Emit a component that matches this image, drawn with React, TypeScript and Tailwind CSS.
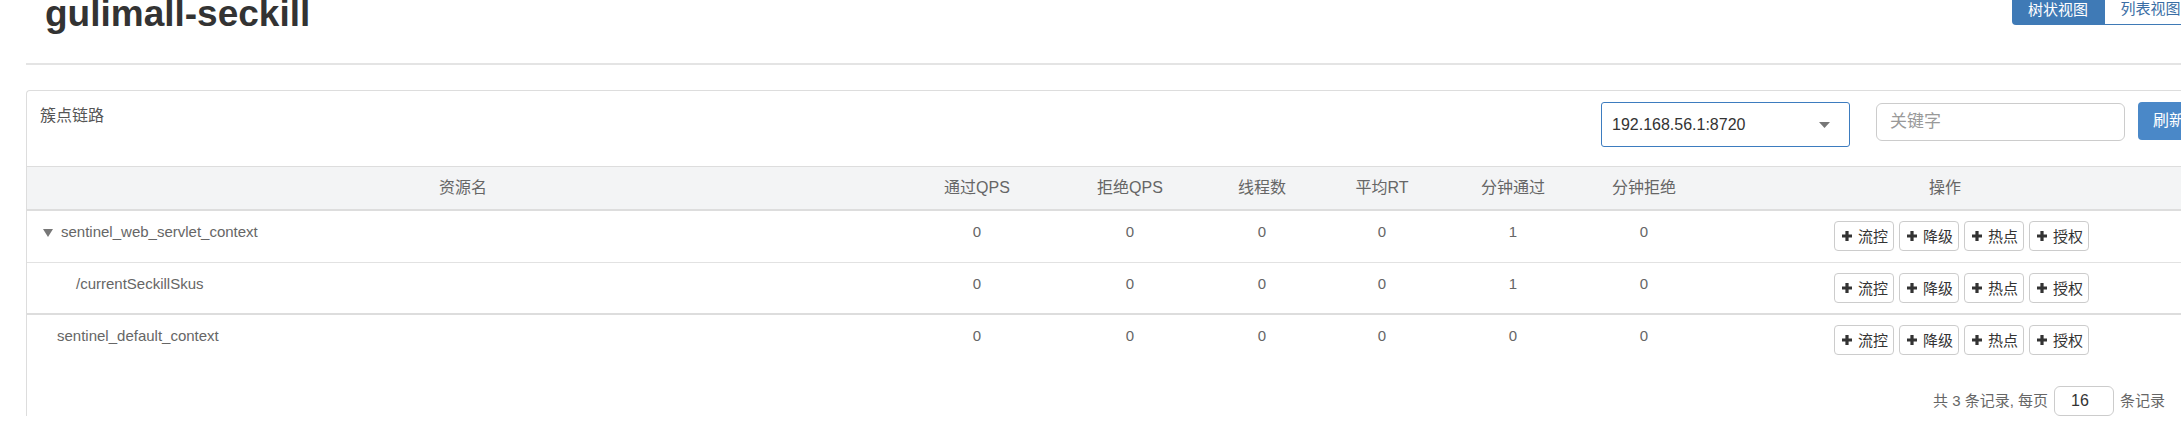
import React from "react";

type Row = {
  name: string;
  pad: string;
  expander: boolean;
  vals: number[];
  border: string;
};

const rows: Row[] = [
  { name: "sentinel_web_servlet_context", pad: "pl-[16px]", expander: true, vals: [0, 0, 0, 0, 1, 0], border: "border-b border-[#e2e2e2]" },
  { name: "/currentSeckillSkus", pad: "pl-[49px]", expander: false, vals: [0, 0, 0, 0, 1, 0], border: "border-b-2 border-[#dddddd]" },
  { name: "sentinel_default_context", pad: "pl-[30px]", expander: false, vals: [0, 0, 0, 0, 0, 0], border: "" },
];

const headers = ["资源名", "通过QPS", "拒绝QPS", "线程数", "平均RT", "分钟通过", "分钟拒绝", "操作"];
const actions = ["流控", "降级", "热点", "授权"];

function PlusIcon() {
  return (
    <svg width="10" height="10" viewBox="0 0 10 10">
      <path d="M3.4 0h3.2v3.4H10v3.2H6.6V10H3.4V6.6H0V3.4h3.4z" fill="#333" />
    </svg>
  );
}

function ActionButton({ label }: { label: string }) {
  return (
    <button className="flex h-[30px] w-[60px] items-center gap-[6px] rounded-[4px] border border-[#cccccc] bg-white pl-[7px] text-[15px] leading-none text-[#333]">
      <PlusIcon />
      <span>{label}</span>
    </button>
  );
}

export default function App() {
  return (
    <div className="h-[428px] w-[2181px] overflow-hidden bg-white font-['Liberation_Sans','Noto_Sans_CJK_SC',sans-serif]">
      <div className="w-[2240px] pl-[26px]">
        {/* page header */}
        <div className="flex h-[63px] items-start pr-[43px]">
          <h1 className="-mt-[6px] ml-[19px] text-[37px] font-bold leading-[40px] text-[#333]">
            gulimall-seckill
          </h1>
          <div className="-mt-[9px] ml-auto flex">
            <button className="h-[34px] w-[92px] rounded-bl-[4px] bg-[#3f7ab6] pt-[4px] text-[15px] text-white">
              树状视图
            </button>
            <button className="h-[34px] w-[93px] border border-[#3f7ab6] bg-white pt-[3px] text-[15px] text-[#3a6ea5]">
              列表视图
            </button>
          </div>
        </div>
        <div className="h-[2px] bg-[#e4e4e4]" />

        {/* card */}
        <div className="mt-[25px] rounded-t-[4px] border border-b-0 border-r-0 border-[#dddddd]">
          <div className="flex h-[75px] items-start">
            <div className="w-[1574px] shrink-0 pl-[13px] pt-[14px] text-[16px] leading-[22px] text-[#555]">簇点链路</div>
            <div className="mt-[11px] flex h-[45px] w-[249px] shrink-0 items-center justify-between rounded-[3px] border border-[#3d7cbf] pl-[10px] pr-[19px] text-[16px] text-[#333]">
              <span>192.168.56.1:8720</span>
              <svg width="11" height="6" viewBox="0 0 11 6">
                <path d="M0 0h11L5.5 6z" fill="#777" />
              </svg>
            </div>
            <div className="ml-[26px] mt-[12px] flex h-[38px] w-[249px] shrink-0 items-center rounded-[6px] border border-[#cccccc] pl-[13px] text-[17px] text-[#999]">
              关键字
            </div>
            <button className="ml-[13px] mt-[11px] h-[38px] w-[66px] shrink-0 rounded-[4px] bg-[#4a88c8] pl-[15px] text-left text-[16px] text-white">
              刷新
            </button>
          </div>

          {/* table header */}
          <div className="grid h-[45px] grid-cols-[872px_156px_150px_114px_126px_136px_126px_476px_1fr] border-b-2 border-t border-[#dddddd] bg-[#f3f4f5] text-[16px] text-[#666]">
            {headers.map((h) => (
              <div key={h} className="flex items-center justify-center">
                {h}
              </div>
            ))}
            <div />
          </div>

          {/* rows */}
          {rows.map((r) => (
            <div
              key={r.name}
              className={`grid h-[52px] grid-cols-[872px_156px_150px_114px_126px_136px_126px_476px_1fr] text-[15px] leading-[22px] text-[#666] ${r.border}`}
            >
              <div className={`flex items-start pt-[10px] ${r.pad}`}>
                {r.expander && (
                  <svg width="10" height="8" viewBox="0 0 10 8" className="mr-[8px] mt-[8px]">
                    <path d="M0 0h10L5 8z" fill="#777" />
                  </svg>
                )}
                <span>{r.name}</span>
              </div>
              {r.vals.map((v, i) => (
                <div key={i} className="pt-[10px] text-center">
                  {v}
                </div>
              ))}
              <div className="flex gap-[5px] pl-[127px] pt-[10px]">
                {actions.map((a) => (
                  <ActionButton key={a} label={a} />
                ))}
              </div>
              <div />
            </div>
          ))}

          {/* footer */}
          <div className="flex items-center gap-[6px] pl-[1906px] pt-[19px] text-[15px] text-[#666]">
            <span>共 3 条记录, 每页</span>
            <div className="flex h-[30px] w-[60px] items-center rounded-[6px] border border-[#cccccc] pl-[16px] text-[16px] text-[#333]">
              16
            </div>
            <span>条记录</span>
          </div>
        </div>
      </div>
    </div>
  );
}
